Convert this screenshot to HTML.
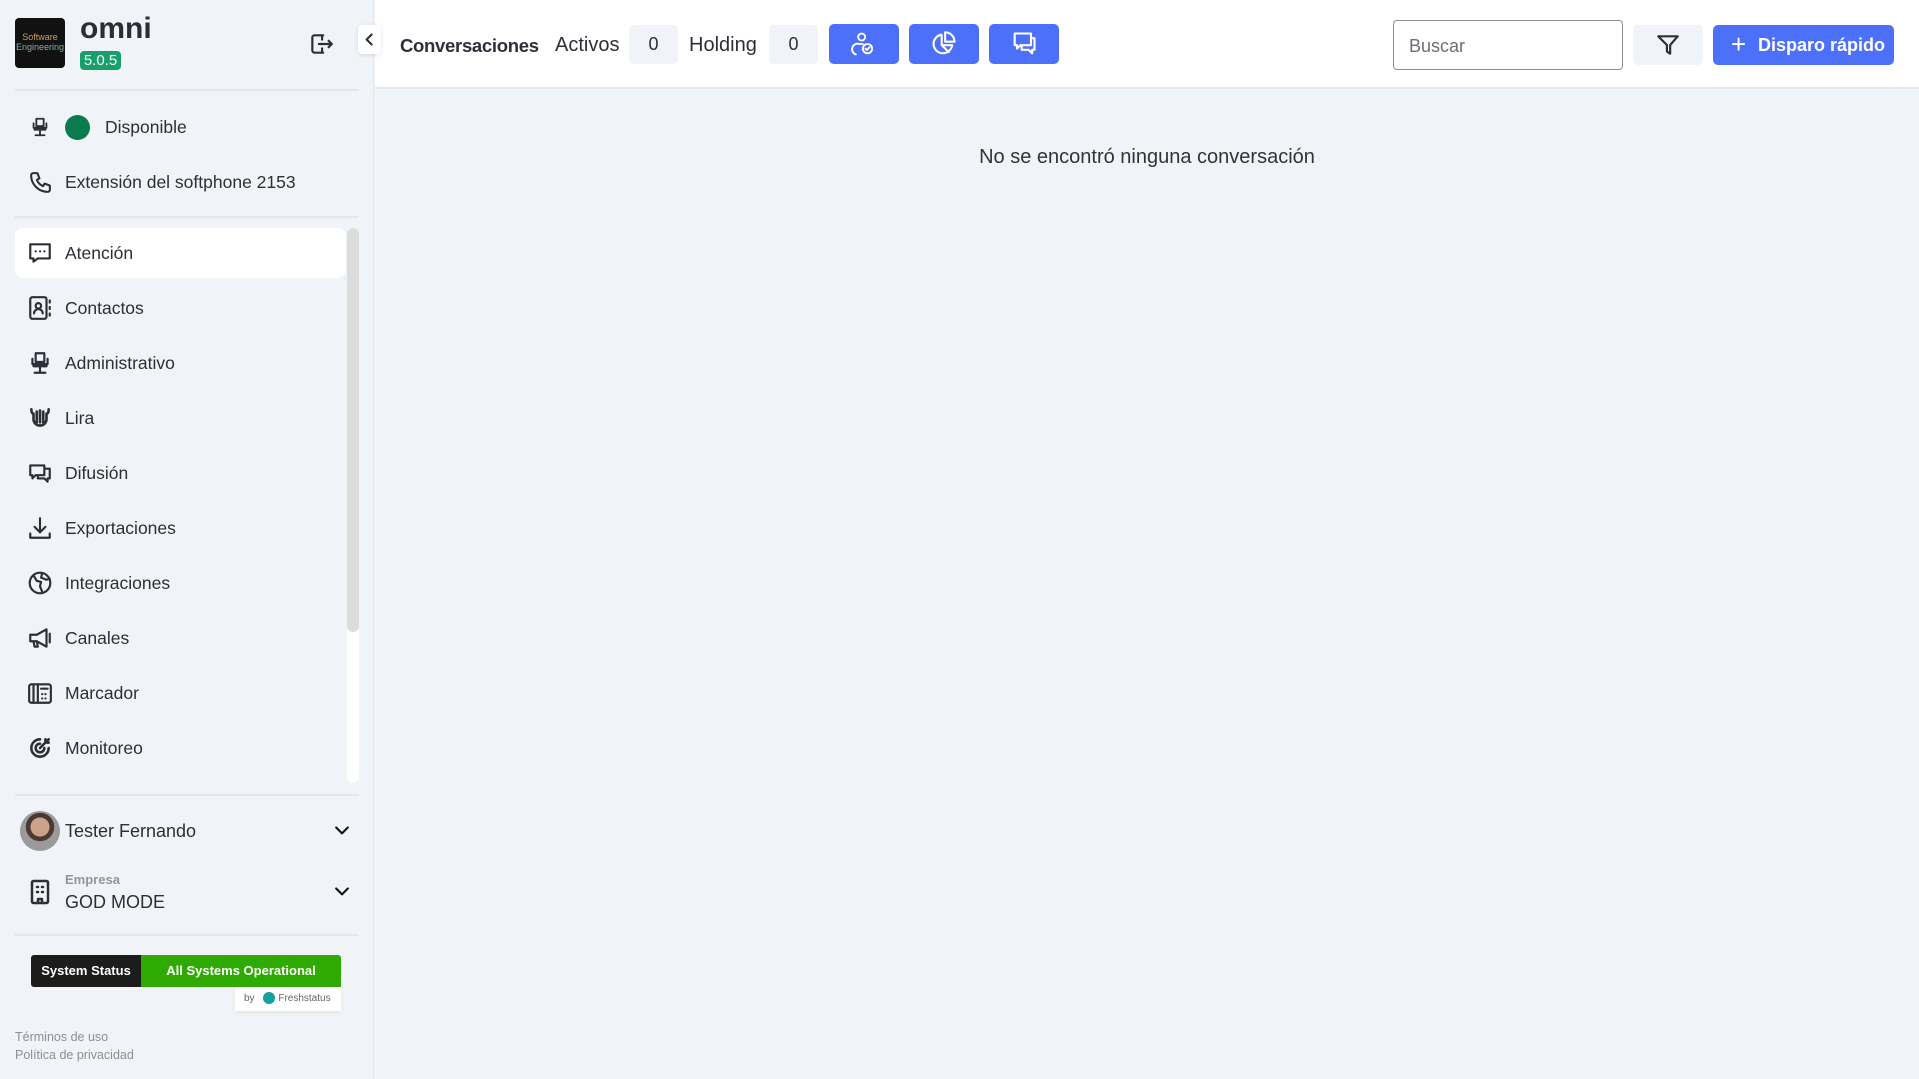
<!DOCTYPE html>
<html><head><meta charset="utf-8">
<style>
*{box-sizing:border-box;margin:0;padding:0}
body{width:1919px;height:1079px;overflow:hidden;background:#f0f3f8;font-family:"Liberation Sans",sans-serif;color:#2d2f38;position:relative}
.abs{position:absolute}
.side{left:0;top:0;width:374px;height:1079px;background:#f0f3f8;border-right:1px solid #e3e6ec}
.div{position:absolute;left:15px;width:344px;height:2px;background:#e2e6ec}
.item{position:absolute;left:15px;width:331px;height:50px;border-radius:8px;display:flex;align-items:center;font-size:17.5px}
.item svg{position:absolute;left:12px;width:26px;height:26px}
.item span{position:absolute;left:50px}
.top{left:375px;top:0;width:1544px;height:89px;background:#fff;border-bottom:2px solid #e4e7ec}
.box{position:absolute;top:25px;width:49px;height:39px;background:#f0f3f8;border-radius:5px;font-size:18px;display:flex;align-items:center;justify-content:center}
.bb{position:absolute;top:24px;width:70px;height:40px;background:#4d70fa;border-radius:5px;display:flex;align-items:center;justify-content:center}
svg{fill:none;stroke:#2d2f38;stroke-width:2;stroke-linecap:round;stroke-linejoin:round}
</style></head><body>
<div class="abs side">
  <div class="abs" style="left:15px;top:18px;width:50px;height:50px;background:#111;border-radius:4px;overflow:hidden">
    <div style="color:#c9a25a;font-size:9px;text-align:center;margin-top:14px;line-height:10px">Software<br><span style="color:#8aa">Engineering</span></div>
  </div>
  <div class="abs" style="left:80px;top:12px;font-size:30px;font-weight:bold;color:#2d2d3a">omni</div>
  <div class="abs" style="left:80px;top:51px;width:41px;height:19px;background:#17a06a;border-radius:4px;color:#fff;font-size:15px;text-align:center;line-height:19px">5.0.5</div>
  <svg class="abs" style="left:308px;top:31px" width="26" height="26" viewBox="0 0 24 24"><path d="M14 4H6a2 2 0 0 0-2 2v12a2 2 0 0 0 2 2h8M13 8v-4M13 20v-4M10 12h12M19 9l3 3-3 3"/></svg>
  <div class="div" style="top:89px"></div>
  <svg class="abs" style="left:29px;top:115px" width="22" height="24" viewBox="0 0 24 24"><path d="M8 3h8v8H8zM5 8v5h14V8M6 13v2h12v-2M12 15v5M7 21h10"/></svg>
  <div class="abs" style="left:65px;top:115px;width:25px;height:25px;border-radius:50%;background:#0b7a4f"></div>
  <div class="abs" style="left:105px;top:117px;font-size:17.5px">Disponible</div>
  <svg class="abs" style="left:28px;top:170px" width="25" height="25" viewBox="0 0 24 24"><path d="M5 3h4l2 5-2.5 1.5a11 11 0 0 0 6 6L16 13l5 2v4a2 2 0 0 1-2 2A16 16 0 0 1 3 5a2 2 0 0 1 2-2"/></svg>
  <div class="abs" style="left:65px;top:172px;font-size:17.5px">Extensión del softphone 2153</div>
  <div class="div" style="top:216px"></div>

  <div class="abs" style="left:347px;top:228px;width:12px;height:555px;background:#fff;border-radius:6px"></div>
  <div class="abs" style="left:347px;top:228px;width:12px;height:404px;background:#dcdcdc;border-radius:6px"></div>

  <div class="item" style="top:228px;background:#fff"><svg viewBox="0 0 24 24"><path d="M3 4h18v13H10l-4 3v-3H3zM8 10.5h.1M12 10.5h.1M16 10.5h.1"/></svg><span>Atención</span></div>
  <div class="item" style="top:283px"><svg viewBox="0 0 24 24"><rect x="3" y="2" width="15" height="20" rx="2"/><circle cx="10.5" cy="10" r="2.5"/><path d="M6.5 17a4 4 0 0 1 8 0M21 5v2M21 11v2M21 17v2"/></svg><span>Contactos</span></div>
  <div class="item" style="top:338px"><svg viewBox="0 0 24 24"><path d="M8 3h8v8H8zM5 8v5h14V8M6 13v2h12v-2M12 15v5M7 21h10"/></svg><span>Administrativo</span></div>
  <div class="item" style="top:393px"><svg viewBox="0 0 24 24"><path d="M4 4c0 3 1 4 2 4v5a6 6 0 0 0 12 0V8c1 0 2-1 2-4M9 6v10M12 5v11M15 6v10" stroke-width="2.4"/></svg><span>Lira</span></div>
  <div class="item" style="top:448px"><svg viewBox="0 0 24 24"><path d="M3 5h13v9H8l-3 3v-3H3zM16 8h5v9h-2v3l-3-3h-6v-3"/></svg><span>Difusión</span></div>
  <div class="item" style="top:503px"><svg viewBox="0 0 24 24"><path d="M12 3v13M7 11l5 5 5-5M3 17v4h18v-4"/></svg><span>Exportaciones</span></div>
  <div class="item" style="top:558px"><svg viewBox="0 0 24 24"><circle cx="12" cy="12" r="9.5"/><path d="M6 5l3 5 4 1-1 4 2 5M14 3l-1 4 5 2 3-1"/></svg><span>Integraciones</span></div>
  <div class="item" style="top:613px"><svg viewBox="0 0 24 24"><path d="M3 9h6l9-5v16l-9-5H3zM6 15l1 5h3l-1-5M21 8v8"/></svg><span>Canales</span></div>
  <div class="item" style="top:668px"><svg viewBox="0 0 24 24"><rect x="2" y="4" width="20" height="17" rx="2"/><path d="M6 4v17M10 4v17M13 8h6M14 13h.1M17 13h.1M14 17h.1M17 17h.1"/></svg><span>Marcador</span></div>
  <div class="item" style="top:723px"><svg viewBox="0 0 24 24"><path d="M20 12a8 8 0 1 1-8-8M16 12a4 4 0 1 1-4-4M12 12l8-8M17 4v3h3" stroke-width="2.4"/></svg><span>Monitoreo</span></div>

  <div class="div" style="top:794px"></div>
  <div class="abs" style="left:20px;top:811px;width:40px;height:40px;border-radius:50%;background:radial-gradient(circle at 50% 40%,#caa18a 0 30%,#4a3a33 31% 45%,#9a9a9a 46%)"></div>
  <div class="abs" style="left:65px;top:821px;font-size:18px">Tester Fernando</div>
  <svg class="abs" style="left:332px;top:820px" width="20" height="20" viewBox="0 0 24 24"><path d="M5 9l7 7 7-7" stroke="#111" stroke-width="2.5"/></svg>
  <svg class="abs" style="left:28px;top:878px" width="24" height="28" viewBox="0 0 24 28"><rect x="4" y="3" width="16" height="22" rx="1.5" stroke-width="2.5"/><path d="M9 9h1M14 9h1M9 14h1M14 14h1M10 25v-4h4v4" stroke-width="2.5"/></svg>
  <div class="abs" style="left:65px;top:872px;font-size:13px;font-weight:bold;color:#9096a0">Empresa</div>
  <div class="abs" style="left:65px;top:892px;font-size:18px">GOD MODE</div>
  <svg class="abs" style="left:332px;top:881px" width="20" height="20" viewBox="0 0 24 24"><path d="M5 9l7 7 7-7" stroke="#111" stroke-width="2.5"/></svg>
  <div class="div" style="top:934px"></div>
  <div class="abs" style="left:31px;top:955px;width:110px;height:32px;background:#1c1c1c;color:#fff;font-size:13px;font-weight:bold;text-align:center;line-height:32px;border-radius:3px 0 0 3px">System Status</div>
  <div class="abs" style="left:141px;top:955px;width:200px;height:32px;background:#2eaa00;color:#fff;font-size:13px;font-weight:bold;text-align:center;line-height:32px;border-radius:0 3px 0 0">All Systems Operational</div>
  <div class="abs" style="left:235px;top:987px;width:106px;height:24px;background:#fff;font-size:10px;color:#666;line-height:24px;padding-left:9px;box-shadow:0 2px 4px rgba(0,0,0,.06)">by <span style="display:inline-block;width:12px;height:12px;border-radius:50%;background:#13a0a0;vertical-align:middle;margin:0 3px 0 6px"></span>Freshstatus</div>
  <div class="abs" style="left:15px;top:1030px;font-size:12.5px;color:#8a8f98">Términos de uso</div>
  <div class="abs" style="left:15px;top:1048px;font-size:12.5px;color:#8a8f98">Política de privacidad</div>
</div>

<div class="abs top">
  <div class="box" style="left:254px">0</div>
  <div class="box" style="left:394px">0</div>
</div>
<div class="abs" style="left:358px;top:25px;width:23px;height:29px;background:#fff;border-radius:4px;box-shadow:0 1px 4px rgba(0,0,0,.12)"><svg style="position:absolute;left:3px;top:6px" width="17" height="17" viewBox="0 0 24 24"><path d="M15 5l-7 7 7 7" stroke-width="3"/></svg></div>
<div class="abs" style="left:400px;top:35px;font-size:18.5px;font-weight:bold;letter-spacing:-0.3px">Conversaciones</div>
<div class="abs" style="left:555px;top:34px;font-size:20px">Activos</div>
<div class="abs" style="left:689px;top:34px;font-size:20px">Holding</div>
<div class="bb" style="left:829px"><svg width="28" height="28" viewBox="0 0 24 24" style="stroke:#fff;stroke-width:1.6"><circle cx="10" cy="6" r="3"/><path d="M5 21a4 4 0 0 1 3-9h3"/><circle cx="15" cy="16" r="4"/><path d="M13.3 16l1.2 1.2 2.2-2.4"/></svg></div>
<div class="bb" style="left:909px"><svg width="28" height="28" viewBox="0 0 24 24" style="stroke:#fff;stroke-width:1.8"><path d="M10 4a8 8 0 1 0 9 9h-9zM13 2v8h8a8 8 0 0 0-8-8M10 13l6 6"/></svg></div>
<div class="bb" style="left:989px"><svg width="28" height="28" viewBox="0 0 24 24" style="stroke:#fff;stroke-width:1.8"><path d="M4 3h14v10H9l-3 3v-3H4zM18 7h3v10h-2v3l-3-3h-6v-4"/></svg></div>

<div class="abs" style="left:1393px;top:20px;width:230px;height:50px;border:1px solid #8e8e96;border-radius:4px;background:#fff;font-size:18px;color:#6b6f78;padding:15px 0 0 15px">Buscar</div>
<div class="abs" style="left:1633px;top:25px;width:70px;height:40px;background:#f0f3f8;border-radius:5px"><svg style="position:absolute;left:22px;top:7px" width="26" height="26" viewBox="0 0 24 24"><path d="M3 4h18l-7 8v8l-3-2v-6z"/></svg></div>
<div class="abs" style="left:1713px;top:25px;width:181px;height:40px;background:#4d70fa;border-radius:5px;color:#fff;font-size:18px;font-weight:bold;line-height:40px;padding-left:45px">Disparo rápido</div>
<div class="abs" style="left:1731px;top:31px;color:#fff;font-size:26px;line-height:26px">+</div>

<div class="abs" style="left:375px;top:146px;width:1544px;text-align:center;font-size:20px;color:#333">No se encontró ninguna conversación</div>
</body></html>
